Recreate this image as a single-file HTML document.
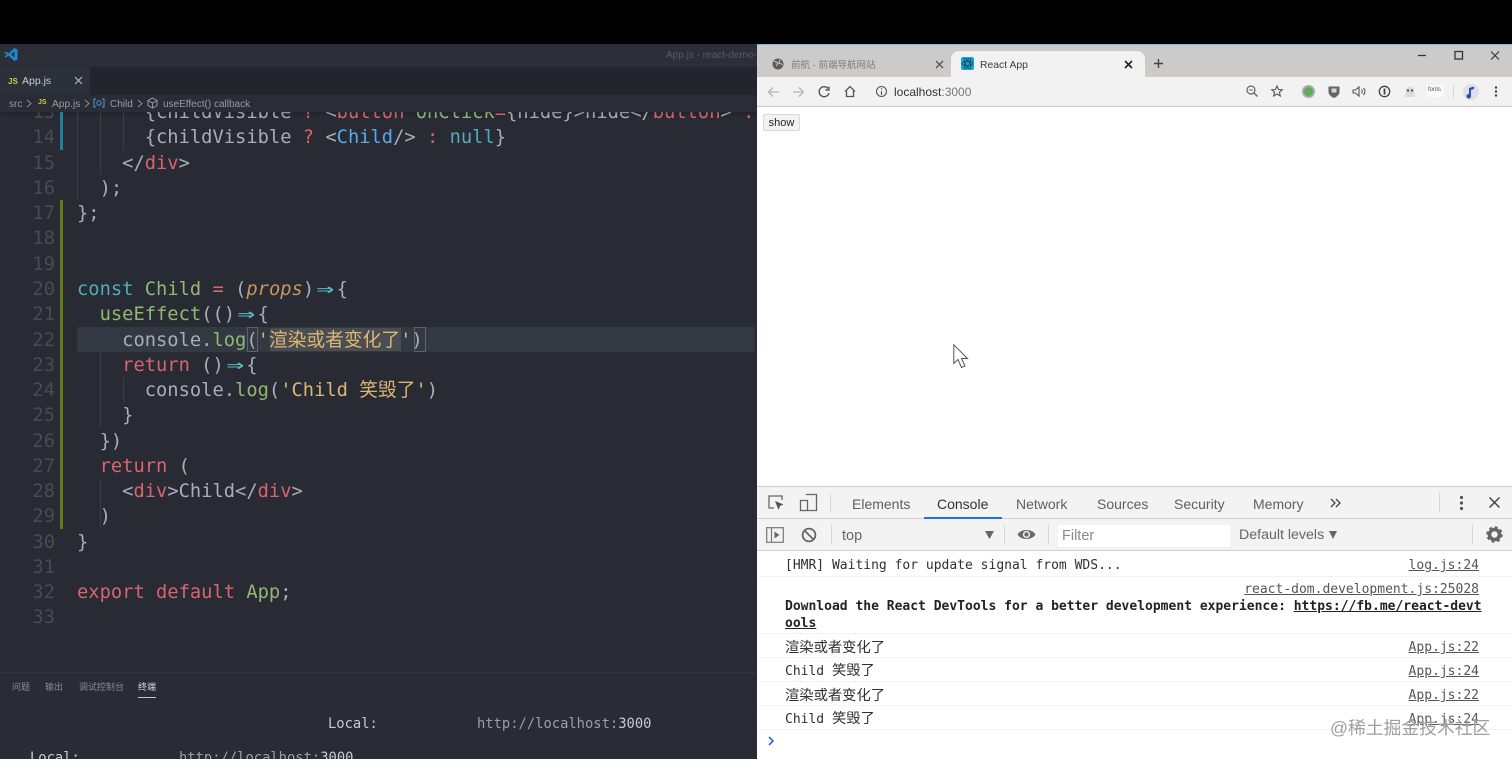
<!DOCTYPE html>
<html lang="zh"><head><meta charset="utf-8"><title>React App</title>
<style>
html,body{margin:0;padding:0;width:1512px;height:759px;overflow:hidden;background:#000}
*{box-sizing:border-box}
#root{position:relative;width:1512px;height:759px;overflow:hidden;background:#000}
.a{position:absolute;white-space:pre}
.code{position:absolute;left:0;width:756px;height:25px;margin-top:1px;font:18.75px/25px "DejaVu Sans Mono","Noto Sans CJK SC",monospace;white-space:pre;color:#a8aeb9}
.n{position:absolute;left:0;width:55px;text-align:right;color:#474b55;top:0}
.t{position:absolute;left:77px;top:0}
.r{color:#d8646d}.g{color:#90b873}.b{color:#5ca8e6}.c{color:#52adb9}.y{color:#dcb673}.o{color:#c8955f;font-style:italic}
.ar{display:inline-block;width:22.5px;text-align:center;color:#56b6c2;font-weight:bold;transform:scaleX(1.55)}
.ui{font-family:"Liberation Sans","Noto Sans CJK SC",sans-serif}
.tab{position:absolute;top:496px;font:14px/16px "Liberation Sans",sans-serif;color:#5f5f5f}
.log{position:absolute;left:785px;font:13px/16px "DejaVu Sans Mono","Noto Sans CJK SC",monospace;color:#303030;white-space:pre}
.z{font-size:14.3px}
.src{position:absolute;right:33px;font:13px/16px "DejaVu Sans Mono",monospace;color:#555;text-decoration:underline;white-space:pre}
.sep{position:absolute;left:757px;width:755px;height:1px;background:#f3f3f3}
svg{position:absolute;overflow:visible}
</style></head><body><div id="root">

<!-- VS Code -->
<div class="a" style="left:0;top:44px;width:757px;height:715px;background:#282b33"></div>
<div class="a" style="left:0;top:44px;width:757px;height:23px;background:#2c2f38"></div>
<div class="a" style="left:0;top:67px;width:757px;height:28px;background:#22252b"></div>
<svg style="left:4px;top:47px" width="14" height="15" viewBox="0 0 14 15"><path d="M10.5 1L13.5 2.5V12.5L10.5 14L4.5 8.5L2 10.5L.5 9.5L3 7.5L.5 5.5L2 4.5L4.5 6.5ZM10.5 4.5L7 7.5L10.5 10.5Z" fill="#1f8ad2"/></svg>
<div class="a ui" style="left:666px;top:49px;font-size:10px;line-height:14px;color:#555a63">App.js - react-demo-</div>

<div class="code" style="top:99.1px"><span class="n">13</span><span class="t">      {childVisible <span class="r">?</span> &lt;<span class="r">button</span> <span class="g">onClick</span><span class="r">=</span>{hide}&gt;hide&lt;/<span class="r">button</span>&gt; <span class="r">:</span></span></div>
<div class="a" style="left:0;top:95px;width:757px;height:17px;background:#2a2d35;box-shadow:0 2px 3px rgba(0,0,0,.2)"></div>
<div class="a" style="left:0;top:67px;width:90px;height:28px;background:#2c3039"></div>
<div class="a ui" style="left:8px;top:76px;font-size:8px;font-weight:bold;line-height:11px;color:#cbcb41">JS</div>
<div class="a ui" style="left:22px;top:74px;font-size:10.5px;line-height:15px;color:#c8ccd4">App.js</div>
<svg style="left:74px;top:76px" width="9" height="9"><path d="M1 1L8 8M8 1L1 8" stroke="#b6bac2" stroke-width="1.1"/></svg>
<div class="a ui" style="left:9px;top:97px;font-size:10px;line-height:15px;color:#969ba5">src</div>
<svg style="left:26px;top:99px" width="6" height="9"><path d="M1 1L5 4.5L1 8" fill="none" stroke="#8a8f99"/></svg>
<div class="a ui" style="left:38px;top:98px;font-size:7px;font-weight:bold;line-height:10px;color:#cbcb41">JS</div>
<div class="a ui" style="left:52px;top:97px;font-size:10.2px;line-height:15px;color:#969ba5">App.js</div>
<svg style="left:84px;top:99px" width="6" height="9"><path d="M1 1L5 4.5L1 8" fill="none" stroke="#8a8f99"/></svg>
<svg style="left:93px;top:98px" width="12" height="10"><path d="M3 1H1V9H3M9 1H11V9H9" fill="none" stroke="#4d9ad6"/><circle cx="6" cy="5" r="2.2" fill="none" stroke="#4d9ad6"/></svg>
<div class="a ui" style="left:110px;top:97px;font-size:10px;line-height:15px;color:#969ba5">Child</div>
<svg style="left:137px;top:99px" width="6" height="9"><path d="M1 1L5 4.5L1 8" fill="none" stroke="#8a8f99"/></svg>
<svg style="left:147px;top:97px" width="11" height="12"><path d="M5.5 1L10 3.5V8.5L5.5 11L1 8.5V3.5ZM1 3.5L5.5 6L10 3.5M5.5 6V11" fill="none" stroke="#979ca6"/></svg>
<div class="a ui" style="left:163px;top:97px;font-size:10px;line-height:15px;color:#969ba5">useEffect() callback</div>

<!-- gutter -->
<div class="a" style="left:60px;top:112px;width:2.5px;height:38px;background:#1f7f9e"></div>
<div class="a" style="left:60px;top:200px;width:2.5px;height:329px;background:#667a1a"></div>
<div class="a" style="left:77px;top:327px;width:678px;height:25px;background:#333943"></div>
<div class="a" style="left:270px;top:328px;width:131px;height:23px;background:#4a4e52"></div>
<div class="a" style="left:247px;top:327px;width:11px;height:25px;border:1px solid #5d636d"></div>
<div class="a" style="left:414px;top:327px;width:12px;height:25px;border:1px solid #5d636d"></div>
<div class="a" style="left:77px;top:112px;width:1px;height:88px;background:#383c45"></div>
<div class="a" style="left:100px;top:112px;width:1px;height:62px;background:#383c45"></div>
<div class="a" style="left:123px;top:112px;width:1px;height:38px;background:#383c45"></div>
<div class="a" style="left:100px;top:352px;width:1px;height:76px;background:#383c45"></div>
<div class="a" style="left:123px;top:377px;width:1px;height:25px;background:#383c45"></div>
<div class="a" style="left:100px;top:478px;width:1px;height:50px;background:#383c45"></div>

<div class="code" style="top:124.4px"><span class="n">14</span><span class="t">      {childVisible <span class="r">?</span> &lt;<span class="b">Child</span>/&gt; <span class="r">:</span> <span class="c">null</span>}</span></div>
<div class="code" style="top:149.6px"><span class="n">15</span><span class="t">    &lt;/<span class="r">div</span>&gt;</span></div>
<div class="code" style="top:174.9px"><span class="n">16</span><span class="t">  );</span></div>
<div class="code" style="top:200.2px"><span class="n">17</span><span class="t">};</span></div>
<div class="code" style="top:225.4px"><span class="n">18</span></div>
<div class="code" style="top:250.7px"><span class="n">19</span></div>
<div class="code" style="top:276px"><span class="n">20</span><span class="t"><span class="c">const</span> <span class="g">Child</span> <span class="r">=</span> (<span class="o">props</span>)<span class="ar">⇒</span>{</span></div>
<div class="code" style="top:301.2px"><span class="n">21</span><span class="t">  <span class="g">useEffect</span>(()<span class="ar">⇒</span>{</span></div>
<div class="code" style="top:326.5px"><span class="n">22</span><span class="t">    console.<span class="g">log</span>(<span class="y">'渲染或者变化了'</span>)</span></div>
<div class="code" style="top:351.8px"><span class="n">23</span><span class="t">    <span class="r">return</span> ()<span class="ar">⇒</span>{</span></div>
<div class="code" style="top:377px"><span class="n">24</span><span class="t">      console.<span class="g">log</span>(<span class="y">'Child 笑毁了'</span>)</span></div>
<div class="code" style="top:402.3px"><span class="n">25</span><span class="t">    }</span></div>
<div class="code" style="top:427.6px"><span class="n">26</span><span class="t">  })</span></div>
<div class="code" style="top:452.8px"><span class="n">27</span><span class="t">  <span class="r">return</span> (</span></div>
<div class="code" style="top:478.1px"><span class="n">28</span><span class="t">    &lt;<span class="r">div</span>&gt;Child&lt;/<span class="r">div</span>&gt;</span></div>
<div class="code" style="top:503.4px"><span class="n">29</span><span class="t">  )</span></div>
<div class="code" style="top:528.6px"><span class="n">30</span><span class="t">}</span></div>
<div class="code" style="top:553.9px"><span class="n">31</span></div>
<div class="code" style="top:579.2px"><span class="n">32</span><span class="t"><span class="r">export default</span> <span class="g">App</span>;</span></div>
<div class="code" style="top:604.4px"><span class="n">33</span></div>

<!-- terminal panel -->
<div class="a" style="left:0;top:672px;width:757px;height:87px;background:#292c35;border-top:1px solid #32353e"></div>
<div class="a ui" style="left:12px;top:680px;font-size:9px;line-height:14px;color:#868b95">问题</div>
<div class="a ui" style="left:45px;top:680px;font-size:9px;line-height:14px;color:#868b95">输出</div>
<div class="a ui" style="left:79px;top:680px;font-size:9px;line-height:14px;color:#868b95">调试控制台</div>
<div class="a ui" style="left:138px;top:680px;font-size:9px;line-height:14px;color:#d5d8de">终端</div>
<div class="a" style="left:138px;top:697px;width:18px;height:1px;background:#c4c7cd"></div>
<div class="a" style="left:328px;top:715px;font:13.8px/18px 'DejaVu Sans Mono',monospace;color:#c6cad2">Local:</div>
<div class="a" style="left:477px;top:715px;font:13.8px/18px 'DejaVu Sans Mono',monospace;color:#9a9fa9">http://localhost:<span style="color:#c6cad2">3000</span></div>
<div class="a" style="left:30px;top:749px;font:13.8px/18px 'DejaVu Sans Mono',monospace;color:#c6cad2">Local:</div>
<div class="a" style="left:179px;top:749px;font:13.8px/18px 'DejaVu Sans Mono',monospace;color:#9a9fa9">http://localhost:<span style="color:#c6cad2">3000</span></div>

<!-- Chrome -->
<div class="a" style="left:757px;top:44px;width:755px;height:715px;background:#fff"></div>
<div class="a" style="left:757px;top:44px;width:755px;height:1px;background:#7fb2d8"></div>
<div class="a" style="left:757px;top:45px;width:755px;height:32px;background:#cdcbca"></div>
<div class="a" style="left:757px;top:77px;width:755px;height:30px;background:#f2f2f2;border-bottom:1px solid #c6c6c6"></div>
<div class="a" style="left:951px;top:51px;width:194px;height:27px;background:#f2f2f2;border-radius:8px 8px 0 0"></div>
<svg style="left:772px;top:58px" width="12" height="12"><circle cx="6" cy="6" r="5.5" fill="#5c5c5c"/><path d="M2 3L6 5L4.5 8M8 1.5L7 5L10.5 6.5" fill="none" stroke="#cdcbca"/></svg>
<div class="a ui" style="left:791px;top:59px;font-size:9.5px;line-height:14px;color:#7d7d7d">前航 - 前端导航网站</div>
<svg style="left:935px;top:60px" width="9" height="9"><path d="M1 1L8 8M8 1L1 8" stroke="#555" stroke-width="1.3"/></svg>
<div class="a" style="left:961px;top:57px;width:13px;height:13px;background:#1aa5cf;border-radius:2px"></div>
<svg style="left:961px;top:57px" width="13" height="13"><g fill="none" stroke="#17475e" stroke-width=".8"><ellipse cx="6.5" cy="6.5" rx="5.5" ry="2.2"/><ellipse cx="6.5" cy="6.5" rx="5.5" ry="2.2" transform="rotate(60 6.5 6.5)"/><ellipse cx="6.5" cy="6.5" rx="5.5" ry="2.2" transform="rotate(120 6.5 6.5)"/></g></svg>
<div class="a ui" style="left:980px;top:59px;font-size:10.4px;line-height:14px;color:#3c3c3c">React App</div>
<svg style="left:1124px;top:60px" width="9" height="9"><path d="M1 1L8 8M8 1L1 8" stroke="#222" stroke-width="1.6"/></svg>
<svg style="left:1153px;top:58px" width="11" height="11"><path d="M5.5 1V10M1 5.5H10" stroke="#444" stroke-width="1.4"/></svg>
<svg style="left:1418px;top:50px" width="82" height="12"><path d="M0 5.5H8" stroke="#333" stroke-width="1.3"/><rect x="37" y="1.5" width="7.5" height="7.5" fill="none" stroke="#333" stroke-width="1.3"/><path d="M73 1.5L81 9.5M81 1.5L73 9.5" stroke="#333" stroke-width="1.1"/></svg>

<svg style="left:767px;top:85px" width="72" height="14" fill="none"><path d="M12 7H1.5M6 2.5L1.5 7L6 11.5" stroke="#b5b5b5" stroke-width="1.3"/><path d="M26 7H36.5M32 2.5L36.5 7L32 11.5" stroke="#b5b5b5" stroke-width="1.3"/><path d="M62 3.5A5 5 0 1 0 63 8M63 1.5V5H59.5" stroke="#555" stroke-width="1.4" transform="translate(-1 0)"/></svg>
<svg style="left:844px;top:85px" width="12" height="13" fill="none"><path d="M1 6.5L6 1.5L11 6.5M2.5 6V11.5H9.5V6" stroke="#555" stroke-width="1.3"/></svg>
<svg style="left:875px;top:85px" width="13" height="13" fill="none"><circle cx="6.5" cy="6.5" r="5" stroke="#555" stroke-width="1.1"/><path d="M6.5 6V10M6.5 3.3V4.6" stroke="#555" stroke-width="1.2"/></svg>
<div class="a ui" style="left:894px;top:85px;font-size:12px;line-height:15px;color:#333">localhost<span style="color:#777">:3000</span></div>

<svg style="left:1246px;top:85px" width="12" height="13" fill="none"><circle cx="5" cy="5" r="4" stroke="#666" stroke-width="1.2"/><path d="M8 8L11.5 11.5" stroke="#666" stroke-width="1.4"/><path d="M3 5H7" stroke="#666"/></svg>
<svg style="left:1271px;top:85px" width="12" height="12" fill="none"><path d="M6 1L7.5 4.5L11.3 4.8L8.4 7.2L9.3 11L6 9L2.7 11L3.6 7.2L.7 4.8L4.5 4.5Z" stroke="#555" stroke-width="1.1"/></svg>
<div class="a" style="left:1302px;top:85px;width:13px;height:13px;border-radius:50%;background:#5eab5e;border:2px solid #a9a9a9"></div>
<svg style="left:1328px;top:85px" width="12" height="13"><path d="M.5 1.5H11.5V7C11.5 10 8 12 6 13C4 12 .5 10 .5 7Z" fill="#666"/><rect x="3.5" y="3.5" width="5" height="4" fill="#d8d8d8"/></svg>
<svg style="left:1352px;top:85px" width="14" height="13" fill="none" stroke="#555" stroke-width="1.1"><path d="M1 5V8H3.5L7 11V2L3.5 5ZM9.5 4.5A3 3 0 0 1 9.5 8.5M11.5 3A5 5 0 0 1 11.5 10"/></svg>
<svg style="left:1378px;top:85px" width="13" height="13" fill="none"><circle cx="6.5" cy="6.5" r="5.2" stroke="#444" stroke-width="1.3"/><path d="M6.5 3.5V9.5" stroke="#444" stroke-width="1.8"/></svg>
<svg style="left:1404px;top:85px" width="12" height="13"><path d="M1.5 6A4.5 4.5 0 0 1 10.5 6V12H1.5Z" fill="#dcdcd6"/><circle cx="4" cy="5.5" r="1.1" fill="#444"/><circle cx="8" cy="5.5" r="1.1" fill="#444"/></svg>
<div class="a" style="left:1427px;top:85px;width:17px;height:12px;background:#fbfbfb"></div>
<div class="a ui" style="left:1428px;top:86px;font-size:6px;line-height:9px;color:#555">fonts</div>
<div class="a" style="left:1453px;top:85px;width:1px;height:13px;background:#d5d5d5"></div>
<div class="a" style="left:1463px;top:84px;width:16px;height:16px;border-radius:50%;background:#dfe0e6"></div>
<svg style="left:1466px;top:85px" width="10" height="14"><path d="M3 11V3L8 1.5V4L5 5V11A2.3 2.3 0 1 1 3 9" fill="#2f52b4"/></svg>
<svg style="left:1494px;top:86px" width="4" height="12"><circle cx="2" cy="1.5" r="1.2" fill="#444"/><circle cx="2" cy="5.5" r="1.2" fill="#444"/><circle cx="2" cy="9.5" r="1.2" fill="#444"/></svg>

<!-- page -->
<div class="a ui" style="left:763px;top:114px;width:37px;height:17px;background:#f2f2f2;border:1px solid #d8d8d8;border-radius:2px;font-size:11px;line-height:16px;text-align:center;color:#222">show</div>
<svg style="left:953px;top:344px" width="17" height="25"><path d="M.8 .8V19.5L5 15.5L8.5 23.5L12 22L8.5 14.5H14.5Z" fill="#fff" stroke="#555" stroke-width="1"/></svg>

<!-- DevTools -->
<div class="a" style="left:757px;top:486px;width:755px;height:33px;background:#f3f3f3;border-top:1px solid #cfcfcf;border-bottom:1px solid #d0d0d0"></div>
<div class="a" style="left:757px;top:519px;width:755px;height:32px;background:#f3f3f3;border-bottom:1px solid #d0d0d0"></div>
<svg style="left:767px;top:494px" width="18" height="18" fill="none"><path d="M7 14H2V2H15V6" stroke="#666" stroke-width="1.3"/><path d="M8 7L16.5 10.5L13 12L11.5 16Z" fill="#555"/></svg>
<svg style="left:799px;top:493px" width="19" height="19" fill="none" stroke="#666" stroke-width="1.3"><path d="M7 1.5H17.5V17.5H8"/><rect x="1.5" y="7.5" width="7" height="10"/></svg>
<div class="a" style="left:830px;top:493px;width:1px;height:19px;background:#d6d6d6"></div>
<div class="tab" style="left:852px">Elements</div>
<div class="tab" style="left:937px;color:#333">Console</div>
<div class="a" style="left:924px;top:517px;width:78px;height:2px;background:#1a73e8"></div>
<div class="tab" style="left:1016px">Network</div>
<div class="tab" style="left:1097px">Sources</div>
<div class="tab" style="left:1174px">Security</div>
<div class="tab" style="left:1253px">Memory</div>
<svg style="left:1330px;top:498px" width="11" height="10" fill="none" stroke="#444" stroke-width="1.3"><path d="M1 1L5 5L1 9M6 1L10 5L6 9"/></svg>
<div class="a" style="left:1439px;top:493px;width:1px;height:19px;background:#d6d6d6"></div>
<svg style="left:1459px;top:495px" width="5" height="16"><circle cx="2.5" cy="2.5" r="1.6" fill="#555"/><circle cx="2.5" cy="8" r="1.6" fill="#555"/><circle cx="2.5" cy="13.5" r="1.6" fill="#555"/></svg>
<svg style="left:1489px;top:497px" width="11" height="11"><path d="M.5 .5L10.5 10.5M10.5 .5L.5 10.5" stroke="#444" stroke-width="1.5"/></svg>

<svg style="left:766px;top:527px" width="18" height="16" fill="none"><rect x=".7" y=".7" width="16.6" height="14.6" stroke="#777" stroke-width="1.2"/><path d="M5.5 1V15" stroke="#777" stroke-width="1.2"/><path d="M8.5 4.5L13.5 8L8.5 11.5Z" fill="#666"/></svg>
<svg style="left:801px;top:527px" width="16" height="16" fill="none"><circle cx="8" cy="8" r="6.4" stroke="#666" stroke-width="1.8"/><path d="M3.5 3.5L12.5 12.5" stroke="#666" stroke-width="1.8"/></svg>
<div class="a" style="left:831px;top:525px;width:1px;height:19px;background:#d6d6d6"></div>
<div class="a ui" style="left:842px;top:528px;font-size:14.5px;line-height:17px;color:#666">top</div>
<svg style="left:985px;top:531px" width="9" height="8"><path d="M0 0H9L4.5 8Z" fill="#666"/></svg>
<div class="a" style="left:1004px;top:525px;width:1px;height:19px;background:#d6d6d6"></div>
<svg style="left:1017px;top:528px" width="19" height="13"><path d="M.5 6.5C4 .5 15 .5 18.5 6.5C15 12.5 4 12.5 .5 6.5Z" fill="#6a6a6a"/><circle cx="9.5" cy="6.5" r="3.6" fill="#f3f3f3"/><circle cx="9.5" cy="6.5" r="2.2" fill="#6a6a6a"/></svg>
<div class="a" style="left:1048px;top:525px;width:1px;height:19px;background:#d6d6d6"></div>
<div class="a" style="left:1058px;top:525px;width:172px;height:22px;background:#fff"></div>
<div class="a ui" style="left:1062px;top:528px;font-size:14.5px;line-height:17px;color:#8a8a8a">Filter</div>
<div class="a ui" style="left:1239px;top:527px;font-size:14.2px;line-height:17px;color:#666">Default levels</div>
<svg style="left:1329px;top:531px" width="8" height="8"><path d="M0 0H8L4 8Z" fill="#666"/></svg>
<div class="a" style="left:1472px;top:525px;width:1px;height:19px;background:#d6d6d6"></div>
<svg style="left:1486px;top:526px" width="17" height="17"><circle cx="8.5" cy="8.5" r="5" fill="none" stroke="#666" stroke-width="3.6"/><circle cx="8.5" cy="8.5" r="7" fill="none" stroke="#666" stroke-width="2.6" stroke-dasharray="2.8 2.7"/></svg>

<!-- console -->
<div class="log" style="top:558px">[HMR] Waiting for update signal from WDS...</div><div class="src" style="top:558px">log.js:24</div>
<div class="sep" style="top:576px"></div>
<div class="src" style="top:582px">react-dom.development.js:25028</div>
<div class="log" style="top:599px;font-weight:bold;color:#222">Download the React DevTools for a better development experience: <u>https://fb.me/react-devt</u></div>
<div class="log" style="top:616px;font-weight:bold;color:#222"><u>ools</u></div>
<div class="sep" style="top:633px"></div>
<div class="log" style="top:640px"><span class="z">渲染或者变化了</span></div><div class="src" style="top:640px">App.js:22</div>
<div class="sep" style="top:657px"></div>
<div class="log" style="top:663px">Child <span class="z">笑毁了</span></div><div class="src" style="top:664px">App.js:24</div>
<div class="sep" style="top:681px"></div>
<div class="log" style="top:688px"><span class="z">渲染或者变化了</span></div><div class="src" style="top:688px">App.js:22</div>
<div class="sep" style="top:705px"></div>
<div class="log" style="top:711px">Child <span class="z">笑毁了</span></div><div class="src" style="top:712px">App.js:24</div>
<div class="sep" style="top:729px"></div>
<svg style="left:767px;top:736px" width="8" height="10"><path d="M2 1L6 5L2 9" fill="none" stroke="#3367d6" stroke-width="1.6"/></svg>
<div class="a ui" style="left:1330px;top:717px;font-size:17.8px;line-height:22px;color:rgba(120,120,120,.72);text-shadow:0 0 1px #fff">@稀土掘金技术社区</div>
</div></body></html>
